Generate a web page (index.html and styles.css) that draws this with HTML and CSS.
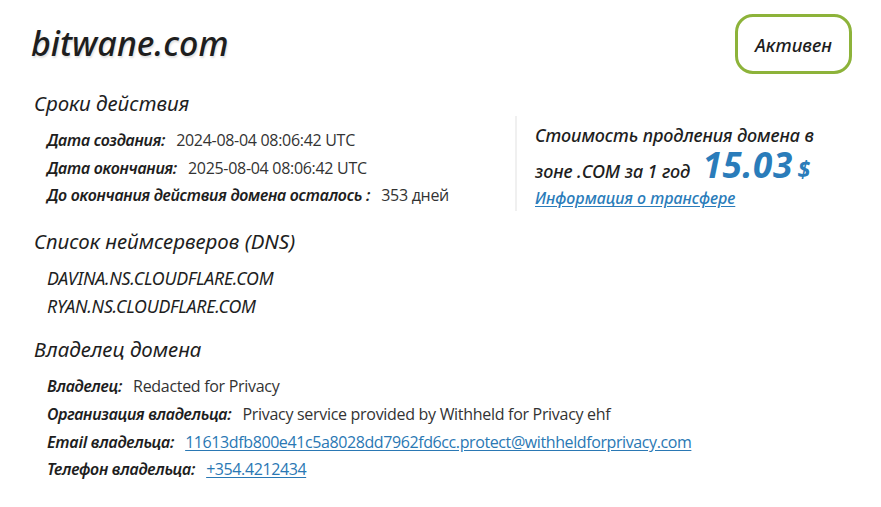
FILE: index.html
```html
<!DOCTYPE html>
<html lang="ru">
<head>
<meta charset="utf-8">
<link rel="stylesheet" href="styles.css">
</head>
<body>
<div class="page">
  <header class="top">
    <h1 class="domain">bitwane.com</h1>
    <div class="badge">Активен</div>
  </header>

  <section class="block first">
    <h2 class="heading">Сроки действия</h2>
    <div class="split">
      <div class="rows">
        <div class="row"><span class="label">Дата создания:</span><span class="value">2024-08-04 08:06:42 UTC</span></div>
        <div class="row"><span class="label">Дата окончания:</span><span class="value">2025-08-04 08:06:42 UTC</span></div>
        <div class="row"><span class="label">До окончания действия домена осталось :</span><span class="value">353 дней</span></div>
      </div>
      <aside class="price">
        <div class="price-text">Стоимость продления домена в</div>
        <div class="price-text second">зоне .COM за 1 год <span class="amount">15.03</span> <span class="cur">$</span></div>
        <a class="transfer" href="#">Информация о трансфере</a>
      </aside>
    </div>
  </section>

  <section class="block dns">
    <h2 class="heading">Список неймсерверов (DNS)</h2>
    <div class="rows">
      <div class="row ns">DAVINA.NS.CLOUDFLARE.COM</div>
      <div class="row ns">RYAN.NS.CLOUDFLARE.COM</div>
    </div>
  </section>

  <section class="block">
    <h2 class="heading">Владелец домена</h2>
    <div class="rows">
      <div class="row"><span class="label">Владелец:</span><span class="value">Redacted for Privacy</span></div>
      <div class="row"><span class="label">Организация владельца:</span><span class="value">Privacy service provided by Withheld for Privacy ehf</span></div>
      <div class="row"><span class="label">Email владельца:</span><a class="value link" href="#">11613dfb800e41c5a8028dd7962fd6cc.protect@withheldforprivacy.com</a></div>
      <div class="row"><span class="label">Телефон владельца:</span><a class="value link" href="#">+354.4212434</a></div>
    </div>
  </section>

  <section class="block">
    <h2 class="heading">Регистратор</h2>
  </section>
</div>
</body>
</html>
```
FILE: styles.css
```css
* { box-sizing: border-box; }
html, body { margin: 0; padding: 0; background: #fff; }
body {
  font-family: "Open Sans", "Noto Sans", sans-serif;
  color: #222;
  overflow: hidden;
  height: 507px;
}
.page {
  width: 881px;
  padding: 13px 30px 0 31px;
}
.top {
  display: flex;
  justify-content: space-between;
  align-items: flex-start;
}
.domain {
  margin: 11px 0 0 0;
  font-family: "Noto Sans", sans-serif;
  font-style: italic;
  font-weight: 500;
  font-size: 34px;
  line-height: 38px;
  letter-spacing: 0;
  color: #1e1e1e;
  text-shadow: 1px 2px 2px rgba(0,0,0,0.12);
}
.badge {
  width: 117px;
  height: 60px;
  border: 3px solid #8db33a;
  border-radius: 18px;
  display: flex;
  align-items: center;
  justify-content: center;
  font-family: "Noto Sans", sans-serif;
  font-style: italic;
  font-weight: 500;
  font-size: 18.5px;
  color: #1e1e1e;
  margin-top: 1px;
  margin-right: -1px;
}
.heading {
  margin: 0;
  font-family: "Noto Sans", sans-serif;
  font-style: italic;
  font-weight: 400;
  font-size: 20.5px;
  line-height: 26px;
  color: #1e1e1e;
  padding-left: 3px;
}
.first .heading { margin-top: 16px; }
.split {
  display: flex;
  align-items: flex-start;
}
.rows {
  padding-left: 16px;
  padding-top: 10px;
  padding-bottom: 19px;
}
.dns .rows { padding-bottom: 17px; }
.split .rows { width: 484px; }
.row {
  height: 27.7px;
  display: flex;
  align-items: center;
  white-space: nowrap;
}
.label {
  font-family: "Noto Sans", sans-serif;
  font-style: italic;
  font-weight: 600;
  font-size: 16px;
  color: #1e1e1e;
  margin-right: 11px;
  letter-spacing: -0.25px;
}
.value {
  font-family: "Open Sans", sans-serif;
  font-size: 16px;
  color: #333;
  letter-spacing: -0.3px;
}
.link {
  color: #2a78b4;
  text-decoration: underline;
  text-underline-offset: 2px;
  letter-spacing: -0.4px;
}
.ns {
  font-family: "Noto Sans", sans-serif;
  font-style: italic;
  font-size: 17.8px;
  color: #1e1e1e;
  letter-spacing: -0.25px;
}
.price {
  margin-top: 0;
  border-left: 2px solid #f0f0f0;
  padding: 5px 0 2px 18px;
  width: 330px;
}
.price-text {
  font-family: "Noto Sans", sans-serif;
  font-style: italic;
  font-weight: 500;
  font-size: 18px;
  line-height: 29px;
  color: #1e1e1e;
  white-space: nowrap;
  letter-spacing: -0.1px;
}
.price-text.second { line-height: 29px; height: 30px; }
.amount {
  margin-left: 8px;
  font-family: "Noto Sans", sans-serif;
  font-style: italic;
  font-weight: 700;
  font-size: 35px;
  line-height: 29px;
  color: #2a7cba;
  letter-spacing: 0.6px;
}
.cur {
  font-weight: 700;
  font-size: 23px;
  line-height: 29px;
  color: #2a7cba;
}
.transfer {
  display: block;
  margin-top: 7px;
  font-family: "Noto Sans", sans-serif;
  font-style: italic;
  font-weight: 500;
  font-size: 16px;
  line-height: 22px;
  color: #2a7cba;
  text-decoration: underline;
  text-underline-offset: 2px;
}
```
